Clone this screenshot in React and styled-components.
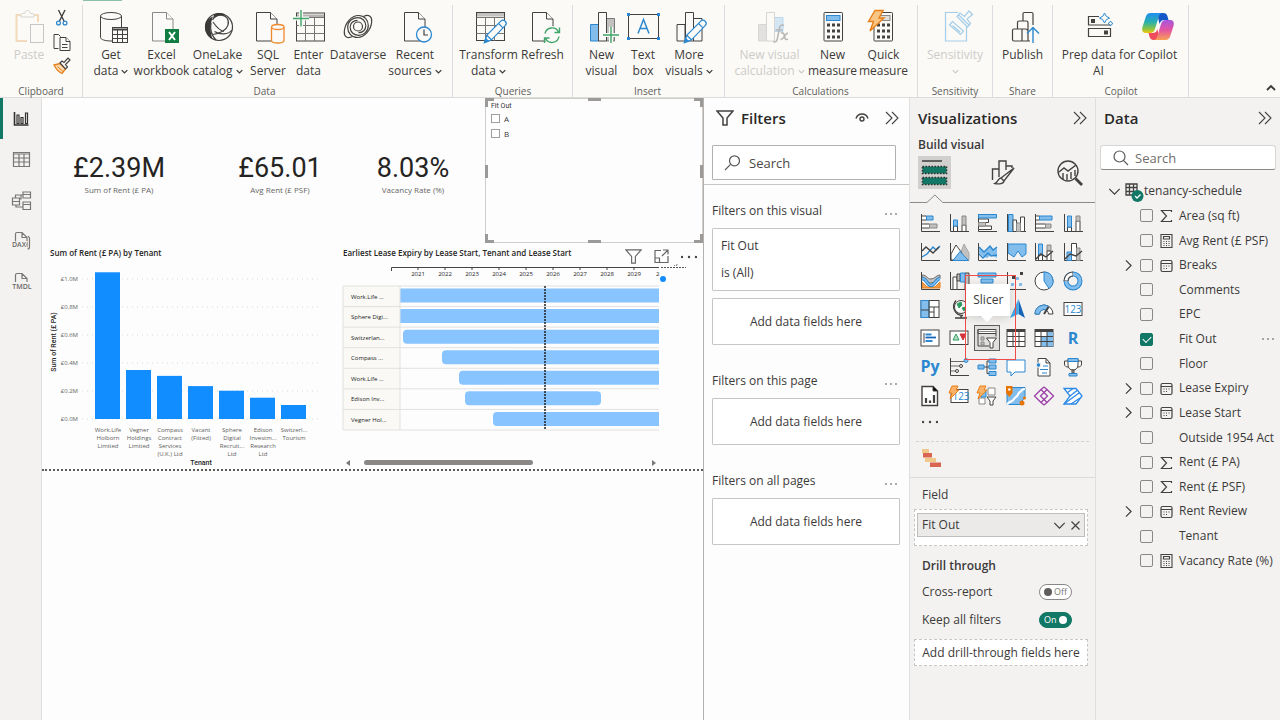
import React, { useState } from 'react'
import styled, { createGlobalStyle } from 'styled-components'

const ink = '#444240'
const blue = '#2b88d0'
const fill = '#83bdec'
const grey = '#c3c1bf'
const green = '#117865'

/* ---------- ribbon icons ---------- */

const Doc = ({ x = 6, color = ink }) => (
    <g fill="#fbfaf8" stroke={color}>
        <path d={`M${x + 0.5} 2.5h14l6.500 6.500v22h-20.500z`} />
        <path d={`M${x + 14.5} 2.500v6.500h6.500`} />
    </g>
)

const Pencil = () => (
    <g fill="#fbfaf8" stroke={blue} strokeWidth="1.2">
        <path d="M12.500 32.500l2.200-7.200L28.800 11.200a3 3 0 0 1 4.400 4.400L19.500 29.800z" />
        <path d="M14.700 25.300l4.800 4.500M26.500 13.500l4.500 4.400" fill="none" />
        <path d="M12.500 32.500l1.200-3.900 2.700 2.600z" fill={blue} />
    </g>
)

const Calc = ({ x = 8, screen = fill, edge = blue }) => (
    <g>
        <rect x={x} y="2.500" width="18.500" height="28.500" rx=".8" fill="#fbfaf8" stroke={ink} />
        <rect x={x + 2.5} y="5.500" width="13.500" height="5" fill={screen} stroke={edge} />
        {[14, 20, 26].map(y => [3, 8, 13].map(dx => (
            <rect key={dx + '-' + y} x={x + dx} y={y - 0.5} width="3" height="3" fill={ink} />
        )))}
    </g>
)

const ribbonIcons = {
    paste: (
        <g fill="none">
            <path d="M11 5H4.500v26H15" stroke="#f3d3ae" strokeWidth="2" />
            <path d="M22 5h4v7" stroke="#f3d3ae" strokeWidth="2" />
            <path d="M9 7V5c0-1 .8-1.500 2-1.500h1.500c.5-2 1.200-3 3-3s2.500 1 3 3H20c1.200 0 2 .5 2 1.500v2z" stroke="#cfcdcb" fill="#fbfaf8" />
            <rect x="18.500" y="14.500" width="13" height="18" stroke="#b9babd" fill="#fbfaf8" />
        </g>
    ),
    database: (
        <g fill="none" stroke={ink}>
            <path d="M6.500 6v21.500c0 2 4.700 3.500 10.500 3.500s10.500-1.500 10.500-3.500V6" fill="#fbfaf8" />
            <ellipse cx="17" cy="6" rx="10.500" ry="3.500" fill="#fbfaf8" />
            <rect x="18.500" y="17.500" width="15" height="15" fill="#fbfaf8" />
            <path d="M18.500 19.500h15" strokeWidth="2" />
            <path d="M18.500 24.500h15M18.500 28.500h15M23.500 20v12.500M28.500 20v12.500" />
        </g>
    ),
    excel: (
        <g>
            <Doc x={7} color="#8b8987" />
            <rect x="20" y="19" width="14" height="14" fill="#107c41" />
            <path d="M24 22l6 8M30 22l-6 8" stroke="#fff" strokeWidth="2" />
        </g>
    ),
    onelake: (
        <g>
            <circle cx="18" cy="17" r="13.500" fill="#fbfaf8" stroke={ink} strokeWidth="1.2" />
            <path d="M13 4.500C15 3 19 2.500 22 3.500c1.200.5 2 1.200 2.500 2.200C20 4.500 15 6 12 9z" fill="#3b3a39" />
            <path d="M12 6.500C6 8.500 4 13.500 4 17c0 5 3 9.500 7.500 12-2.500-7-2.500-15 .5-22.500z" fill="#3b3a39" />
            <path d="M11.500 10c3-5.500 11-6.500 14.500-2 3 4.500 1 10-4 13-4 2.200-8 3.500-11.500 3.500M31 20c-4 5-12 5-17.500 1.500M12 12c3 4 5 8 11 9.500M10 13c-1 6 0 12 5 17" fill="none" stroke={ink} strokeWidth="1.200" />
        </g>
    ),
    sql: (
        <g>
            <Doc x={5} />
            <path d="M20.500 17v13.500c0 1.400 2.800 2.500 6.200 2.500s6.300-1.100 6.300-2.500V17" fill="#fbfaf8" stroke="#ee8a2e" strokeWidth="1.300" />
            <ellipse cx="26.800" cy="17" rx="6.200" ry="2.500" fill="#fbfaf8" stroke="#ee8a2e" strokeWidth="1.300" />
        </g>
    ),
    enter: (
        <g fill="none" stroke={ink}>
            <rect x="4.500" y="3" width="28" height="28" />
            <path d="M5 4.500h27v2.500H5z" fill="#b5b3b1" stroke="none" />
            <path d="M4.500 7.500h28M4.500 15.500h28M4.500 23.500h28M13.500 8v23M22.500 8v23" stroke="#777" />
            <path d="M9 0v16.500M1 8.500h16" stroke="#fbfaf8" strokeWidth="4" />
            <path d="M9 0v16.500M1 8.500h16" stroke="#3fa568" strokeWidth="1.400" />
        </g>
    ),
    dataverse: (
        <g fill="none" stroke={ink} strokeWidth="1.200">
            <path d="M11.500 26.500C6.500 29 3 27 3.300 21.500 3.800 13 10.500 5.500 17.500 5.500c5.800 0 9.800 4.500 9.800 10 0 5.800-4.300 9.800-9.800 9.800-5 0-8.300-3.500-8.300-8" />
            <path d="M22.500 6.500C27.500 4 31 6 30.700 11.500 30.200 20 23.500 27.500 16.500 27.500c-5.800 0-9.800-4.500-9.800-10 0-5.800 4.300-9.800 9.800-9.800 5 0 8.300 3.500 8.300 8" />
            <circle cx="17" cy="16.500" r="4.500" />
            <path d="M9.200 17.300c0-4 3-7 7.300-7M24.800 15.700c0 4-3 7-7.300 7" />
        </g>
    ),
    recent: (
        <g>
            <Doc x={6} />
            <circle cx="26" cy="24.500" r="7.500" fill="#fbfaf8" stroke={blue} strokeWidth="1.300" />
            <path d="M26 19.500v5.500h4" fill="none" stroke={ink} strokeWidth="1.200" />
        </g>
    ),
    transform: (
        <g fill="none" stroke={ink}>
            <rect x="4.500" y="2.500" width="28" height="28" />
            <path d="M5 3h27v3.500H5z" fill="#c3c1bf" stroke="none" />
            <path d="M4.500 7.500h28M4.500 15.500h28M4.500 23.500h28M13.500 7v24M22.500 7v24" stroke="#777" />
            <Pencil />
        </g>
    ),
    refresh: (
        <g>
            <Doc x={6} />
            <circle cx="26" cy="25" r="9" fill="#fbfaf8" />
            <path d="M19 23.500a7.200 7.200 0 0 1 13.500-1.500M33 26.500a7.200 7.200 0 0 1-13.500 2M33.500 17.500v5h-5M18.500 33v-5h5" fill="none" stroke="#3fa568" strokeWidth="1.400" />
        </g>
    ),
    newVisual: (
        <g>
            <path d="M21.500 8.500h8v22.500h-8z" fill={grey} stroke="#777" />
            <path d="M5.500 14.500h8v16.500h-8z" fill={fill} stroke={blue} />
            <path d="M13.500 2.500h8v28.500h-8z" fill="#fbfaf8" stroke={ink} />
            <path d="M26 17v16M18 25h16" stroke="#fbfaf8" strokeWidth="4" />
            <path d="M26 17v16M18 25h16" stroke="#3fa568" strokeWidth="1.400" />
        </g>
    ),
    textBox: (
        <g>
            <rect x="2.500" y="4.500" width="30" height="24" fill="none" stroke={ink} />
            {[[2.5, 4.5], [32.5, 4.5], [2.5, 28.5], [32.5, 28.5]].map(([x, y]) => (
                <rect key={x + '-' + y} x={x - 1.5} y={y - 1.5} width="3" height="3" fill={blue} />
            ))}
            <path d="M12 23.500L17.500 9.500L23 23.500M13.800 18.500h7.400" fill="none" stroke={blue} strokeWidth="1.500" />
        </g>
    ),
    moreVisuals: (
        <g>
            <path d="M21.500 8.500h8.500v22.500h-8.500zM5 14.500h8v16.500H5zM13.500 2.500h8v28.500h-8z" fill="#fbfaf8" stroke={ink} />
            <Pencil />
        </g>
    ),
    newCalc: (
        <g>
            <path d="M5.500 14.500h8v16.500h-8z" fill="#dddcdb" stroke="#cfcecd" />
            <path d="M21.500 7.500h8.500v14h-8.500z" fill="#c9e2f4" stroke="#a9d0ee" />
            <path d="M13.500 2.500h8v28.500h-8z" fill="#fbfaf8" stroke="#cfcecd" />
            <path d="M31 15.500c-2.500-1.500-4 0-4.500 2.500l-2.200 11c-.5 2.500-1.800 3.500-4 2.500M22.500 20h7M28 23c2.500-1 3 1 3.500 3.500s1.500 4 3.500 2.500M35 23c-3 0-4 6.500-7.500 6.500" fill="none" stroke="#a8a6a4" strokeWidth="1.500" />
        </g>
    ),
    calc: <Calc x={8} />,
    quick: (
        <g>
            <Calc x={7} screen="#e1dfdd" edge="#8a8886" />
            <path d="M8 .5h8L12 8h5L3 21l3.500-9.500H1.500z" fill="#f9c686" stroke="#e8801a" strokeWidth="1.400" />
        </g>
    ),
    sensitivity: (
        <g fill="none" stroke="#8fc3e8" strokeWidth="1.200">
            <path d="M20 2.500H7.500v28.500h21V17" />
            <path d="M11.500 15l3-3.500L25.500 21l-3 3.500zM14.500 15.500l7.500 6.500" />
            <path d="M19 6.500l3-3.500 4.500 3.500L31 1l3.500 3.500-5.500 4.500 3.500 4.500-3 3.500z" />
            <path d="M20.500 4.800l10.500 10.200" />
        </g>
    ),
    publish: (
        <g fill="none" stroke={ink} strokeWidth="1.200">
            <path d="M6.500 20.500c0-.8.5-1.500 1.500-1.500h8v12H8c-1 0-1.500-.7-1.500-1.500zM11.500 19v-6.500c0-.8.500-1.500 1.500-1.500h7.500c1 0 1.500.7 1.500 1.500V31M17 11V4c0-.8.500-1.500 1.500-1.500h7c1 0 1.500.7 1.500 1.500v11M16 19h3.500c1 0 2 .7 2 1.500M16 31h8" />
            <path d="M27 33V18M21 23.500l6-6 6 6" stroke={blue} strokeWidth="1.400" />
        </g>
    ),
    prep: (
        <g fill="none" stroke={ink}>
            <path d="M17 6.500H6.500v8.500h22M6.500 18.500h22v8h-22z" strokeWidth="1.200" />
            <rect x="9" y="9" width="4" height="4" fill={ink} stroke="none" />
            <rect x="22" y="20.500" width="4" height="4" fill={ink} stroke="none" />
            <path d="M22.500 3q1 4 5 5q-4 1-5 5q-1-4-5-5q4-1 5-5zM28.500 11q.7 2 2.500 2.500q-1.800.7-2.500 2.500q-.7-1.800-2.500-2.500q1.800-.5 2.500-2.500z" stroke={blue} />
        </g>
    ),
    copilot: (
        <g>
            <defs>
                <linearGradient id="cpA" x1="0" y1="0" x2="0" y2="1">
                    <stop offset="0" stopColor="#1e8df0" />
                    <stop offset=".45" stopColor="#28b0b0" />
                    <stop offset=".75" stopColor="#7cc24d" />
                    <stop offset="1" stopColor="#f2c80f" />
                </linearGradient>
                <linearGradient id="cpB" x1="0" y1="0" x2="0" y2="1">
                    <stop offset="0" stopColor="#a456e0" />
                    <stop offset=".5" stopColor="#e454a0" />
                    <stop offset="1" stopColor="#f9a054" />
                </linearGradient>
            </defs>
            <path d="M16 3h6c3 0 4 1.500 4.700 4l.8 3h-4c-3 0-4 1.500-5 4z" fill="#1557c8" />
            <path d="M18 30h-5c-3 0-4-1.500-4.700-4l-.8-3h4c3 0 4-1.500 5-4z" fill="#ee4b5c" />
            <path d="M9.500 3H21c-2 .5-2.800 2-3.500 4.500L14 19c-.8 2.700-2.200 4-5 4H5c-3.500 0-4.500-2.500-3.500-6L4.700 7C5.600 4.200 7 3 9.500 3z" fill="url(#cpA)" />
            <path d="M24.500 30H13c2-.5 2.800-2 3.500-4.500L20 14c.8-2.700 2.200-4 5-4h4c3.500 0 4.500 2.500 3.500 6l-3.200 10c-.9 2.800-2.300 4-4.800 4z" fill="url(#cpB)" />
        </g>
    ),
}

const RibbonIcon = ({ name }) => (
    <svg width="34" height="34" viewBox="0 0 34 34" overflow="visible" aria-hidden="true">{ribbonIcons[name]}</svg>
)

const CutIcon = () => (
    <svg width="18" height="18" viewBox="0 0 18 18" fill="none" aria-hidden="true">
        <path d="M5.500 1l5.500 11M12 1L6.500 12" stroke={ink} strokeWidth="1.400" />
        <circle cx="5.500" cy="14" r="1.900" stroke={blue} strokeWidth="1.300" />
        <circle cx="12" cy="14" r="1.900" stroke={blue} strokeWidth="1.300" />
    </svg>
)

const CopyIcon = () => (
    <svg width="18" height="18" viewBox="0 0 18 18" fill="#fbfaf8" stroke={ink} aria-hidden="true">
        <path d="M5.500 15.500H1V1.500h4.500l2 2" />
        <path d="M7 4.500h6l4 4v9H7z" />
        <path d="M13 4.500v4h4M9 11.500h5.500M9 14.500h5.500" />
    </svg>
)

const BrushIcon = () => (
    <svg width="18" height="18" viewBox="0 0 18 18" fill="none" aria-hidden="true">
        <path d="M1 8l6-1.500 5.500 5.500-3.500 4.500C6 15 3 12 1 8z" fill="#fbd9b0" stroke="#e8801a" strokeWidth="1.300" />
        <path d="M7 6l2-2 2 1.500L15 1l2 2-4.500 4.500L14.500 10l-2 2z" stroke={ink} strokeWidth="1.200" fill="#fbfaf8" />
        <path d="M4.500 9.500l5.500 5" stroke="#e8801a" />
    </svg>
)

const Chevron = ({ dir = 'down', size = 8, width = 1.2, color = 'currentColor' }) => {
    const d = { down: 'M1 3l4 4 4-4', up: 'M1 7l4-4 4 4', right: 'M3 1l4 4-4 4' }[dir]
    return (
        <svg width={size} height={size} viewBox="0 0 10 10" fill="none" stroke={color} strokeWidth={width} aria-hidden="true">
            <path d={d} />
        </svg>
    )
}

const DoubleChevron = () => (
    <svg width="14" height="14" viewBox="0 0 14 14" fill="none" stroke={ink} strokeWidth="1.100" aria-hidden="true">
        <path d="M1 1l6 6-6 6M7 1l6 6-6 6" />
    </svg>
)

const FunnelIcon = ({ size = 18, color = ink, width = 1.5 }) => (
    <svg width={size} height={size} viewBox="0 0 18 18" fill="none" stroke={color} strokeWidth={width} aria-hidden="true">
        <path d="M1 2h16l-6 7v7H7V9z" />
    </svg>
)

const EyeIcon = () => (
    <svg width="14" height="12" viewBox="0 0 14 12" fill="none" stroke={ink} strokeWidth="1.400" aria-hidden="true">
        <path d="M1 6.500C2 3.500 4.200 2 7 2S12 3.500 13 6.500" />
        <circle cx="7" cy="7" r="2" />
    </svg>
)

const SearchIcon = ({ flip }) => (
    <svg width="16" height="16" viewBox="0 0 16 16" fill="none" stroke="#5a5856" strokeWidth="1.200" aria-hidden="true">
        {flip
            ? <path d="M15 15l-4.300-4.300M12 6.500a5.500 5.500 0 1 1-11 0 5.500 5.500 0 0 1 11 0z" />
            : <path d="M1 15l5.300-5.300M15.500 5.800a5 5 0 1 1-10 0 5 5 0 0 1 10 0z" />}
    </svg>
)

/* ---------- left rail icons ---------- */

const railIcons = {
    report: (
        <g stroke="#323130" strokeWidth="1.200">
            <path d="M3.500 4v13h14" strokeWidth="1.600" />
            <path d="M6 7h2v8.500H6zM10 9.500h2v6h-2zM14.500 5h2v10.500h-2z" />
        </g>
    ),
    table: <path d="M2.500 3.500h16v14h-16zM2.500 5h16M2.500 9h16M2.500 13h16M8 5v12.500M13 5v12.500" />,
    model: <path d="M1.500 8h7v7h-7zM1.500 11.500h7M12 2h7.500v6H12zM12 4.500h7.500M12 12h7.500v7.500H12zM12 14.500h7.500M8.500 9H10V5h2M4.500 8V5H10M5 15v2h7" />,
    dax: <path d="M4.500 11V3c0-1 .5-1.500 1.500-1.500h5l5 5V17M11 1.500v5h5M17 5l1.500 2v9c0 1.500-1 2-2 2" />,
    tmdl: <path d="M4.500 10V3c0-1 .5-1.500 1.500-1.500h5l5 5V10M11 1.500v5h5" />,
}

/* ---------- visual gallery icons ---------- */

const axis = <path d="M1.500 1v17.500H20" fill="none" />

const visualIcons = [
    ['Stacked bar chart', <g>{axis}<path d="M1.500 3h5v4h-5zM1.500 11h8v4h-8z" fill="#fff" /><path d="M6.500 3H13v4H6.500z" fill={fill} stroke={blue} /><path d="M9.500 11H17v4H9.500z" fill={grey} stroke="#8a8886" /></g>],
    ['Stacked column chart', <g>{axis}<path d="M4.500 13h4v5.500h-4zM13 12h4v6.500h-4z" fill="#fff" /><path d="M4.500 7h4v6h-4z" fill={fill} stroke={blue} /><path d="M13 3h4v9h-4z" fill={grey} stroke="#8a8886" /></g>],
    ['Clustered bar chart', <g>{axis}<path d="M1.500 6h10v3.500h-10zM1.500 13h13v3.500h-13z" fill="#fff" /><path d="M1.500 9.500h7V13h-7z" fill={grey} stroke="#8a8886" /><path d="M1.500 1.500h18V5h-18z" fill={fill} stroke={blue} /></g>],
    ['Clustered column chart', <g>{axis}<path d="M2.500 1.500H7v17H2.500z" fill={fill} stroke={blue} /><path d="M7 7h3.500v11.500H7zM14.500 4h4v14.500h-4z" fill="#fff" /><path d="M10.500 10h4v8.500h-4z" fill={grey} stroke="#8a8886" /></g>],
    ['100% stacked bar chart', <g>{axis}<path d="M1.500 3h4v4h-4zM1.500 11h10v4h-10z" fill="#fff" /><path d="M5.500 3H18v4H5.500z" fill={fill} stroke={blue} /><path d="M11.500 11H17v4h-5.500z" fill={grey} stroke="#8a8886" /></g>],
    ['100% stacked column chart', <g>{axis}<path d="M4.500 14h4v4.500h-4zM13 8h4v10.500h-4z" fill="#fff" /><path d="M4.500 3h4v11h-4z" fill={fill} stroke={blue} /><path d="M13 3h4v5h-4z" fill={grey} stroke="#8a8886" /></g>],
    ['Line chart', <g fill="none">{axis}<path d="M2 15l5-3 6-7 3 3 4-4" stroke={blue} strokeWidth="1.400" /><path d="M2 9l4-4 7 6 6-6" strokeWidth="1.400" /></g>],
    ['Area chart', <g>{axis}<path d="M9 18L15 2l5 9v7z" fill={grey} stroke="#a8a6a4" /><path d="M2 12l5-9 6 8 -5 7H2z" fill="#fff" /><path d="M4 18.500l7-9 8.500 9z" fill={fill} stroke={blue} /></g>],
    ['Stacked area chart', <g><path d="M2 5l5 5 6-6 3 4 4-3v11l-6-3-4 3-3-1-5-4z" fill={fill} stroke="none" /><path d="M2 5l5 5 6-6 3 4 4-3M2 12l4 4 5-5 3 3 6-1" fill="none" stroke={blue} strokeWidth="1.400" />{axis}</g>],
    ['100% stacked area chart', <g><path d="M2 2h18v10l-4 3-4-6-4 6-6-4z" fill={fill} stroke={blue} />{axis}</g>],
    ['Line and stacked column', <g>{axis}<path d="M4.500 2h4v11h-4z" fill={fill} stroke={blue} /><path d="M13 3h4v6h-4z" fill={grey} stroke="#8a8886" /><path d="M4.500 13h4v5.500h-4zM13 9h4v9.500h-4z" fill="#fff" /><path d="M2 17l5-5 5 3 7-6" fill="none" strokeWidth="1.400" /></g>],
    ['Line and clustered column', <g>{axis}<path d="M8.500 1.500h5v17h-5z" fill="#fff" /><path d="M4 10h4.500v8.500H4z" fill={fill} stroke={blue} /><path d="M13.500 6h3.500v12.500h-3.500z" fill={grey} stroke="#8a8886" /><path d="M2 17l5-5 6 2 6-5" fill="none" strokeWidth="1.400" /></g>],
    ['Ribbon chart', <g fill="none"><path d="M2 11l5 5h8l5-5v6H2z" fill="#f0a050" stroke="#e8801a" /><path d="M2 4c5 0 5 4 9 4s5-4 9-4v4c-4 0-5 4-9 4S7 8 2 8z" fill={grey} stroke="#6d6b69" /><path d="M2 7.500c5 0 5 7 9 7s5-7 9-7" stroke={blue} strokeWidth="3.400" /><path d="M2 7.500c5 0 5 7 9 7s5-7 9-7" stroke={fill} strokeWidth="1.500" />{axis}</g>],
    ['Waterfall chart', <g>{axis}<path d="M4 6h4v12.500H4z" fill="#fff" /><path d="M8 3h3v7H8zM16 2h4v16h-4z" fill={grey} /><path d="M11.500 2h4.500v9h-4.500z" fill={fill} stroke={blue} /></g>],
    ['Funnel', <g fill={fill} stroke={blue}><path d="M1 2h18v4H1zM4 8h12v4H4zM7 14h6v4H7z" /></g>],
    ['Scatter chart', <g>{axis}<g stroke="none" fill={ink}><rect x="6" y="5" width="3" height="3" /><rect x="14" y="1" width="3" height="3" /></g><g stroke="none" fill={fill}><rect x="10" y="6" width="3" height="3" /><rect x="5" y="12" width="3" height="3" /><rect x="13" y="12" width="3" height="3" /></g></g>],
    ['Pie chart', <g><circle cx="10" cy="10" r="9" fill="#fff" /><path d="M10 1a9 9 0 0 1 5 16.500L10 10z" fill={fill} stroke={blue} /></g>],
    ['Donut chart', <g fill="none"><circle cx="10" cy="10" r="7" stroke={blue} strokeWidth="5" /><circle cx="10" cy="10" r="7" stroke={fill} strokeWidth="3" /><path d="M3 10a7 7 0 0 1 7-7" stroke={ink} strokeWidth="5" /><path d="M3 9.500a7 7 0 0 1 6.500-6.500" stroke="#fff" strokeWidth="3" /></g>],
    ['Treemap', <g><rect x="1" y="1.500" width="18" height="17" fill="#fff" /><path d="M1 1.500h8v17H1z" fill={fill} stroke={blue} /><path d="M9 1.500v17M9 8h10M14 8v10.500M9 13h5M1 11h8" fill="none" /></g>],
    ['Map', <g fill="none"><circle cx="12" cy="8" r="6.500" fill="#fff" /><path d="M7 1.500a9 9 0 0 0 7 15M12 16v2.500M6 19h12" strokeWidth="1.400" /><path d="M8 5l4-2 1 3-3 3zM13 9l4-1-2 4z" fill="#2f9e63" stroke="#2f9e63" /></g>],
    ['Filled map', <path d="M2 4l5-2 6 2 6-2v13l-6 2-6-2-5 2z" fill={fill} stroke={blue} />],
    ['Azure map', <g stroke="none"><path d="M12.500 0L19 19l-6.500-4z" fill="#1565b8" /><path d="M12.500 0L4 19l8.500-4z" fill="#45a7e8" /></g>],
    ['Gauge', <g><path d="M1 15a9 9 0 0 1 18 0h-4.500a4.500 4.500 0 0 0-9 0z" fill="#fff" /><path d="M1 15a9 9 0 0 1 13.500-7.800L12 11a4.500 4.500 0 0 0-6.500 4z" fill={fill} stroke={blue} /><path d="M10 15l4.500-7" strokeWidth="2" /></g>],
    ['Card', <g><rect x="1" y="3.500" width="18" height="13" fill="#fff" /><Digits x={10} /></g>],
    ['Multi-row card', <g><rect x="1" y="2" width="18" height="16" fill="#fff" /><path d="M4 5v10" /><path d="M5.500 6.500h6M5.500 13h7" stroke={blue} strokeWidth="1.800" /><path d="M5.500 9.500H16" stroke="#1565b8" strokeWidth="1.800" /></g>],
    ['KPI', <g><rect x="1" y="3" width="18" height="13.500" fill="#fff" /><path d="M4 12l3-6 3 6z" fill="#b7dcc4" stroke="#2f9e63" /><path d="M11 6h6l-3 6z" fill="#d13438" stroke="#d13438" /></g>],
    ['Slicer', <g><path d="M1 1.500h18v4H1z" fill="#fff" /><path d="M1 5.500h18M1 1.500v16.500h11M19 5.500v3" fill="none" /><path d="M1 3.500h18" stroke="#8a8886" /><path d="M4 9h3v3H4zM4 14h3v3H4z" fill={grey} stroke="#8a8886" /><path d="M9.500 10h10l-3.500 4.500V20h-3v-5.500z" fill="#fff" /></g>],
    ['Table', <g><rect x="1" y="1.500" width="18" height="17" fill="#fff" /><path d="M1 3h18" strokeWidth="2" /><path d="M1 8.500h18M1 13.500h18M7 4v14.500M13 4v14.500" /></g>],
    ['Matrix', <g><rect x="1" y="1.500" width="18" height="17" fill="#fff" /><path d="M1 3h18" strokeWidth="2" /><path d="M13 4h6v9.500h-6zM7 9h6v9.500H7zM13 13.500h6v5h-6z" fill={fill} stroke="none" /><path d="M1 8.500h18M1 13.500h18M7 4v14.500M13 4v14.500" /></g>],
    ['R script visual', <Letter x={10} y={16} size={16}>R</Letter>],
    ['Python visual', <Letter x={10} y={15} size={16}>Py</Letter>],
    ['Key influencers', <g fill="none">{axis}<path d="M2 4.500h13M2 9h8M2 14h5" strokeWidth="1.200" stroke="#6d6b69" /><circle cx="17" cy="3.500" r="2" fill={fill} stroke={blue} /><circle cx="12" cy="9" r="1.500" /><circle cx="8" cy="14" r="1.500" /></g>],
    ['Decomposition tree', <g><path d="M7 10h5M10 4v12.500h2M10 4h2" fill="none" /><path d="M1 8h6v4H1zM12 2h7v4h-7zM12 8h7v4h-7zM12 14.500h7v4h-7z" fill={fill} stroke={blue} /></g>],
    ['Q and A', <path d="M1 3h18v12H9l-4 4v-4H1z" fill="#fff" stroke={blue} />],
    ['Smart narrative', <g><path d="M4 1.500h8l4 4.500v13H4zM12 1.500V6h4" fill="#fff" /><circle cx="4.500" cy="8" r="2.300" fill={blue} stroke="#f3f2f1" /><path d="M9 9h5M6 12.500h8M8 16h5" stroke={blue} /></g>],
    ['Metrics', <g><path d="M5 2h10v6c0 3-2 5-5 5s-5-2-5-5zM5 4H1.500v3c0 2 1.500 3 3.500 3M15 4h3.500v3c0 2-1.500 3-3.500 3" fill="#fff" /><path d="M5 1.500h10v3H5z" fill={fill} stroke={blue} /><path d="M9 13h2v3H9z" fill={grey} /><path d="M6 16.500h8v2.500H6z" fill={fill} stroke={blue} /></g>],
    ['Paginated report', <g><path d="M2 .5h11l4.500 4.500v14.500H2z" fill="#fff" strokeWidth="1.400" /><path d="M13 .5V5h4.500" /><path d="M6 12v5M10 14.500V17M14 9v8" strokeWidth="2.200" /></g>],
    ['Card (new)', <g><rect x="2" y="3.500" width="17" height="13" fill="#fff" /><Digits x={12} /><path d="M3 0h6L7 4h3L1 13l2-6H0z" fill="#f9b368" stroke="#e8801a" /></g>],
    ['Slicer (new)', <g><path d="M11 2h7v7h-7zM2 12h6v6H2z" fill="#fff" stroke="#8a8886" /><path d="M4 5h5v6H4z" fill={fill} stroke={blue} /><path d="M10 11h9l-3 4v4h-3v-4z" fill="#fff" /><path d="M3 0h6L7 4h3L1 13l2-6H0z" fill="#f9b368" stroke="#e8801a" /></g>],
    ['ArcGIS map', <g><path d="M1 1.500h18v9l-5 8H1z" fill={fill} stroke={blue} /><path d="M19 3c-4 0-3 2-5 3s-2 4-4 5-2 3-4 4-3 1-5 3.500" fill="none" stroke="#fff" strokeWidth="2.200" /><path d="M0 0h6.500v7l-3.200 4L0 7z" fill="#e87400" stroke="none" /><circle cx="3.300" cy="3.500" r="1.300" fill="#fff" stroke="none" /><circle cx="16" cy="17" r="2.500" fill="#e87400" stroke="none" /><circle cx="18.500" cy="12" r="1.500" fill="#e87400" stroke="none" /></g>],
    ['Power Apps', <g fill="none" stroke="#9b3fa8" strokeWidth="1.300"><path d="M7 3.500l3-2.500 3 2.500L19.500 10 13 16.500 10 19l-3-2.500L.5 10z" /><path d="M7 3.500L13.500 10 7 16.500M13 3.500L6.500 10l6.500 6.500" /></g>],
    ['Power Automate', <g fill="#fff" stroke="#2b88e8" strokeWidth="1.300"><path d="M1 2.500h12l6 7.500-6 8H1l6-8z" /><path d="M4.500 6.500L10 2.500M7 10l7-5.500M1 18L16 7M8 18l9-6" fill="none" /></g>],
]

function Digits({ x }) {
    return <text x={x} y="14" textAnchor="middle" fontSize="10" fontFamily="Open Sans, sans-serif" fill={blue} stroke="none">123</text>
}

function Letter({ x, y, size, children }) {
    return <text x={x} y={y} textAnchor="middle" fontSize={size} fontWeight="700" fontFamily="Open Sans, sans-serif" fill={blue} stroke="none">{children}</text>
}

const fieldIcons = {
    sum: <path d="M12.500 4V2.500H2.500l5 5.500-5 5.500h10V12" strokeWidth="1.200" />,
    calc: <path d="M2 1.500h11v13H2zM4.500 3.500h6v2.500h-6zM4.500 8.500h1M7 8.500h1M9.500 8.500h1M4.500 10.500h1M7 10.500h1M9.500 10.500h1M4.500 12.500h1M7 12.500h1M9.500 12.500h1" strokeWidth="1.100" />,
    date: <path d="M3.500 2.500h8q1.500 0 1.500 1.500v8q0 1.500-1.500 1.500h-8q-1.500 0-1.500-1.500V4q0-1.500 1.500-1.500zM2 5.500h11M4.500 8h1M7 8h1M9.500 8h1M4.500 10.500h1M7 10.500h1" strokeWidth="1.200" />,
}

/* ---------- content ---------- */

const ribbon = [
    { label: 'Data', pad: '0 9px 0 3px', tools: [
        { icon: 'database', lines: ['Get', 'data'], menu: true, w: 50 },
        { icon: 'excel', lines: ['Excel', 'workbook'], w: 51 },
        { icon: 'onelake', lines: ['OneLake', 'catalog'], menu: true, w: 61 },
        { icon: 'sql', lines: ['SQL', 'Server'], w: 40 },
        { icon: 'enter', lines: ['Enter', 'data'], w: 41 },
        { icon: 'dataverse', lines: ['Dataverse'], w: 58 },
        { icon: 'recent', lines: ['Recent', 'sources'], menu: true, w: 56 },
    ] },
    { label: 'Queries', pad: '0 5px 0 6px', tools: [
        { icon: 'transform', lines: ['Transform', 'data'], menu: true, w: 59 },
        { icon: 'refresh', lines: ['Refresh'], w: 49 },
    ] },
    { label: 'Insert', pad: '0 10px 0 8px', tools: [
        { icon: 'newVisual', lines: ['New', 'visual'], w: 41 },
        { icon: 'textBox', lines: ['Text', 'box'], w: 42 },
        { icon: 'moreVisuals', lines: ['More', 'visuals'], menu: true, w: 50 },
    ] },
    { label: 'Calculations', pad: '0 8px 0 7px', tools: [
        { icon: 'newCalc', lines: ['New visual', 'calculation'], menu: true, off: true, w: 75 },
        { icon: 'calc', lines: ['New', 'measure'], w: 51 },
        { icon: 'quick', lines: ['Quick', 'measure'], w: 51 },
    ] },
    { label: 'Sensitivity', pad: '0 7px', tools: [
        { icon: 'sensitivity', lines: ['Sensitivity', ''], menu: true, off: true, w: 60 },
    ] },
    { label: 'Share', pad: '0 5px', tools: [
        { icon: 'publish', lines: ['Publish'], w: 49 },
    ] },
    { label: 'Copilot', pad: '0 8px 0 9px', tools: [
        { icon: 'prep', lines: ['Prep data for', 'AI'], w: 73 },
        { icon: 'copilot', lines: ['Copilot'], w: 45 },
    ] },
]

const cards = [
    ['£2.39M', 'Sum of Rent (£ PA)'],
    ['£65.01', 'Avg Rent (£ PSF)'],
    ['8.03%', 'Vacancy Rate (%)'],
]

const rents = [
    [1.048, ['Work.Life', 'Holborn', 'Limited']],
    [0.35, ['Vegner', 'Holdings', 'Limited']],
    [0.308, ['Compass', 'Contract', 'Services', '(U.K.) Ltd']],
    [0.235, ['Vacant', '(Fitted)']],
    [0.202, ['Sphere', 'Digital', 'Recruit...', 'Ltd']],
    [0.152, ['Edison', 'Investm...', 'Research', 'Ltd']],
    [0.1, ['Switzerl...', 'Tourism']],
]

const leases = [
    ['Work.Life ...', 61, 320],
    ['Sphere Digi...', 61, 320],
    ['Switzerlan...', 64, 320],
    ['Compass ...', 103, 320],
    ['Work.Life ...', 120, 320],
    ['Edison Inv...', 126, 262],
    ['Vegner Hol...', 154, 320],
]

const fields = [
    { name: 'Area (sq ft)', icon: 'sum' },
    { name: 'Avg Rent (£ PSF)', icon: 'calc' },
    { name: 'Breaks', icon: 'date', open: true },
    { name: 'Comments' },
    { name: 'EPC' },
    { name: 'Fit Out', checked: true },
    { name: 'Floor' },
    { name: 'Lease Expiry', icon: 'date', open: true },
    { name: 'Lease Start', icon: 'date', open: true },
    { name: 'Outside 1954 Act' },
    { name: 'Rent (£ PA)', icon: 'sum' },
    { name: 'Rent (£ PSF)', icon: 'sum' },
    { name: 'Rent Review', icon: 'date', open: true },
    { name: 'Tenant' },
    { name: 'Vacancy Rate (%)', icon: 'calc' },
]

/* ---------- charts ---------- */

const RentChart = () => {
    const base = 157
    const unit = 140
    return (
        <svg viewBox="0 0 297 207" width="100%" role="img" aria-label="Sum of Rent (£ PA) by Tenant">
            {[0, 0.2, 0.4, 0.6, 0.8, 1].map(v => (
                <g key={v}>
                    <line x1="40" x2="276" y1={base - v * unit} y2={base - v * unit} stroke="#dcdad8" strokeDasharray="1 4" />
                    <ChartText x="36" y={base - v * unit + 2} textAnchor="end" fill="#666">£{v.toFixed(1)}M</ChartText>
                </g>
            ))}
            {rents.map(([v, lines], i) => (
                <g key={i}>
                    <rect x={53 + i * 31} y={base - v * unit} width="25" height={v * unit} fill="#118dff" />
                    {lines.map((line, n) => (
                        <ChartText key={n} x={66 + i * 31} y={170 + n * 8} textAnchor="middle" fill="#605e5c">{line}</ChartText>
                    ))}
                </g>
            ))}
            <AxisTitle x="159" y="203" textAnchor="middle">Tenant</AxisTitle>
            <AxisTitle textAnchor="middle" transform="translate(14 80) rotate(-90)">Sum of Rent (£ PA)</AxisTitle>
        </svg>
    )
}

const LeaseChart = () => (
    <svg viewBox="0 0 364 207" width="100%" role="img" aria-label="Earliest Lease Expiry by Lease Start">
        <path d="M52.500 9V5.500H320" fill="none" stroke="#444" />
        {[2021, 2022, 2023, 2024, 2025, 2026, 2027, 2028, 2029].map((year, i) => (
            <g key={year}>
                <line x1={79 + i * 27} x2={79 + i * 27} y1="5" y2="8" stroke="#444" />
                <ChartText x={79 + i * 27} y="14" textAnchor="middle" fill="#222">{year}</ChartText>
            </g>
        ))}
        <ChartText x="317" y="14" fill="#222">2</ChartText>
        <path d="M322 5.500h25" stroke="#555" strokeDasharray="2 1" />
        <path d="M335 3.500h3M338 2v2" stroke="#777" strokeDasharray="1 1" />
        <circle cx="324" cy="17" r="3" fill="#118dff" />
        <rect x="4" y="24" width="57" height="144" fill="#faf9f5" />
        {leases.map(([name, from, to], i) => {
            const y = 24 + i * 144 / 7
            const open = to === 320
            const r = from > 61 ? 4 : 0
            return (
                <g key={i}>
                    <line x1="4" x2="320" y1={y} y2={y} stroke="#e3e1df" />
                    <ChartText x="12" y={y + 12.5} fill="#222">{name}</ChartText>
                    <path
                        fill="#88c4ff"
                        d={open
                            ? `M320 ${y + 2.5}V${y + 16.5}H${from + r}q${-r} 0 ${-r} ${-r}V${y + 2.5 + r}q0 ${-r} ${r} ${-r}z`
                            : `M${to - r} ${y + 2.5}q${r} 0 ${r} ${r}V${y + 16.5 - r}q0 ${r} ${-r} ${r}H${from + r}q${-r} 0 ${-r} ${-r}V${y + 2.5 + r}q0 ${-r} ${r} ${-r}z`}
                    />
                </g>
            )
        })}
        <path d="M4 168H320M4 24v144M61 24v144" stroke="#e3e1df" />
        <line x1="206" x2="206" y1="24" y2="168" stroke="#222" strokeWidth="1.500" strokeDasharray="2 1" />
        <path d="M11 198v6l-4-3zM313 198v6l4-3z" fill="#7a7876" />
        <rect x="25" y="198" width="169" height="5" rx="2.500" fill="#8a8886" />
    </svg>
)

const Toggle = ({ label, initial }) => {
    const [on, setOn] = useState(initial)
    return (
        <ToggleRow>
            {label}
            <input type="checkbox" role="switch" checked={on} onChange={() => setOn(!on)} />
            <Track $on={on}><span>{on ? 'On' : 'Off'}</span><i /></Track>
        </ToggleRow>
    )
}

const FilterSection = ({ title, children }) => (
    <Section>
        <SectionHead>
            <h3>{title}</h3>
            <PlainButton aria-label="More options"><Dots /></PlainButton>
        </SectionHead>
        {children}
        <DropCard>Add data fields here</DropCard>
    </Section>
)

const Dots = ({ size = 12 }) => (
    <svg width={size} height="4" viewBox={`0 0 ${size} 4`} fill={ink} aria-hidden="true">
        {[1, size / 2, size - 1].map(x => <circle key={x} cx={x} cy="2" r={size > 14 ? 1.2 : 0.8} />)}
    </svg>
)

const App = () => {
    const [picked, setPicked] = useState(fields.filter(f => f.checked).map(f => f.name))
    const toggle = name => setPicked(picked.includes(name) ? picked.filter(n => n !== name) : [...picked, name])

    return (
        <Page>
            <GlobalStyle />
            <Ribbon>
                <Clipboard>
                    <Tools>
                        <Tool $w={58} disabled>
                            <RibbonIcon name="paste" />
                            <span>Paste</span>
                        </Tool>
                        <SmallTools>
                            <PlainButton aria-label="Cut"><CutIcon /></PlainButton>
                            <PlainButton aria-label="Copy"><CopyIcon /></PlainButton>
                            <PlainButton aria-label="Format painter"><BrushIcon /></PlainButton>
                        </SmallTools>
                    </Tools>
                    <GroupLabel>Clipboard</GroupLabel>
                </Clipboard>
                {ribbon.map(group => (
                    <Group key={group.label} $pad={group.pad}>
                        <Tools>
                            {group.tools.map(tool => (
                                <Tool key={tool.lines.join(' ')} $w={tool.w} disabled={tool.off}>
                                    <RibbonIcon name={tool.icon} />
                                    {tool.lines.map((line, i) => (
                                        <span key={i}>
                                            {line}
                                            {tool.menu && i === tool.lines.length - 1 && <Chevron size={7} width={1.8} />}
                                        </span>
                                    ))}
                                </Tool>
                            ))}
                        </Tools>
                        <GroupLabel>{group.label}</GroupLabel>
                    </Group>
                ))}
                <Collapse aria-label="Collapse ribbon"><Chevron dir="up" size={10} width={1.8} /></Collapse>
            </Ribbon>

            <Body>
                <Rail>
                    {Object.keys(railIcons).map((name, i) => (
                        <RailButton key={name} $active={i === 0} aria-label={name + ' view'}>
                            <svg width="21" height="21" viewBox="0 0 21 21" fill="none" stroke="#797775" strokeWidth="1.200" overflow="visible">
                                {railIcons[name]}
                                {i > 2 && (
                                    <text x={i === 3 ? 8 : 11} y={i === 3 ? 16 : 17} textAnchor="middle" fontSize="7" fontWeight="600" fill="#6b6967" stroke="#f3f2f1" strokeWidth="2" paintOrder="stroke">
                                        {name.toUpperCase()}
                                    </text>
                                )}
                            </svg>
                        </RailButton>
                    ))}
                </Rail>

                <Canvas>
                    <TopRow>
                        {cards.map(([value, label]) => (
                            <Card key={label}>
                                <strong>{value}</strong>
                                <span>{label}</span>
                            </Card>
                        ))}
                        <Slicer>
                            <legend>Fit Out</legend>
                            {['A', 'B'].map(v => (
                                <label key={v}><SlicerBox type="checkbox" />{v}</label>
                            ))}
                            {['top left', 'top center', 'top right', 'middle left', 'middle right', 'bottom left', 'bottom center', 'bottom right'].map(at => (
                                <Handle key={at} $at={at} />
                            ))}
                        </Slicer>
                    </TopRow>
                    <ChartRow>
                        <Chart>
                            <ChartHead $left={8}><h4>Sum of Rent (£ PA) by Tenant</h4></ChartHead>
                            <RentChart />
                        </Chart>
                        <Chart>
                            <ChartHead $left={4}>
                                <h4>Earliest Lease Expiry by Lease Start, Tenant and Lease Start</h4>
                                <ChartTools>
                                    <PlainButton aria-label="Filters"><FunnelIcon size={17} color="#666" width={1.2} /></PlainButton>
                                    <PlainButton aria-label="Focus mode">
                                        <svg width="15" height="15" viewBox="0 0 15 15" fill="none" stroke="#666" strokeWidth="1.200">
                                            <path d="M7 1.500H1v12h13V7M1 9h4.500v4.500M9 1h5v4.500M8 7l6-6" />
                                        </svg>
                                    </PlainButton>
                                    <PlainButton aria-label="More options"><Dots size={16} /></PlainButton>
                                </ChartTools>
                            </ChartHead>
                            <LeaseChart />
                        </Chart>
                    </ChartRow>
                </Canvas>

                <Filters>
                    <FilterTitle>
                        <FunnelIcon />
                        <h2>Filters</h2>
                        <PlainButton aria-label="Hide pane"><EyeIcon /></PlainButton>
                        <PlainButton aria-label="Collapse filters"><DoubleChevron /></PlainButton>
                    </FilterTitle>
                    <FilterSearch>
                        <SearchIcon />
                        <input type="search" placeholder="Search" aria-label="Search filters" />
                    </FilterSearch>
                    <FilterSection title="Filters on this visual">
                        <FilterCard>
                            <span>Fit Out</span>
                            <span>is (All)</span>
                        </FilterCard>
                    </FilterSection>
                    <FilterSection title="Filters on this page" />
                    <FilterSection title="Filters on all pages" />
                </Filters>

                <Visuals>
                    <PaneTitle>
                        <h2>Visualizations</h2>
                        <PlainButton aria-label="Collapse visualizations"><DoubleChevron /></PlainButton>
                    </PaneTitle>
                    <BuildLabel>Build visual</BuildLabel>
                    <BuildTabs>
                        <BuildTab $active aria-label="Build visual">
                            <svg width="27" height="27" viewBox="0 0 27 27" stroke="#323130" fill={green}>
                                <path d="M1 2h20" strokeWidth="1.400" />
                                <path d="M1.500 7.500h24v7h-24zM1.500 18.500h24v7h-24z" strokeWidth="1.600" strokeDasharray="1.500 1.500" />
                            </svg>
                        </BuildTab>
                        <BuildTab aria-label="Format visual">
                            <svg width="27" height="27" viewBox="0 0 27 27" stroke={ink} strokeWidth="1.400" fill="none">
                                <path d="M3.500 21V10H10M10 18V2h7v9M17 7h6v2" />
                                <path d="M25 9L12 19l3 3L25 9zM12 19c-3 0-3 4-6 5.500 4 1 9 0 9-2.500" fill="#f3f2f1" />
                            </svg>
                        </BuildTab>
                        <BuildTab aria-label="Analytics">
                            <svg width="27" height="27" viewBox="0 0 27 27" stroke={ink} strokeWidth="1.400" fill="none">
                                <circle cx="12" cy="12" r="10" />
                                <path d="M3 13l5-4 4 3 8-6M7 14v6M11 15v6M15 13v7M19 11v6" />
                                <path d="M19.500 19.500L26 26" strokeWidth="2.800" />
                            </svg>
                        </BuildTab>
                    </BuildTabs>
                    <Notch width="186" height="9" viewBox="0 0 186 9" fill="none" stroke="#8a8886" aria-hidden="true">
                        <path d="M0 8.500h17l8-7.500 8 7.500h153" />
                    </Notch>
                    <Gallery>
                        {visualIcons.map(([name, art]) => (
                            <VisualButton key={name} $active={name === 'Slicer'} aria-label={name}>
                                <svg width="20" height="20" viewBox="0 0 20 20" stroke={ink} overflow="visible">{art}</svg>
                                {name === 'Slicer' && <><Highlight /><Tip role="tooltip">Slicer</Tip></>}
                            </VisualButton>
                        ))}
                    </Gallery>
                    <MoreVisuals aria-label="More visuals"><Dots size={16} /></MoreVisuals>
                    <CustomVisuals>
                        <PlainButton aria-label="Gantt">
                            <svg width="20" height="20" viewBox="0 0 20 20">
                                <path d="M1 1h7v4H1zM4 10h11v4H4z" fill="#efc98b" />
                                <path d="M2 5h9v4.500H2zM9 14.500h11V19H9z" fill="#d96650" />
                            </svg>
                        </PlainButton>
                    </CustomVisuals>
                    <Wells>
                        <h3>Field</h3>
                        <Well>
                            <Pill>
                                <span>Fit Out</span>
                                <PlainButton aria-label="Field options"><Chevron size={13} width={0.9} /></PlainButton>
                                <PlainButton aria-label="Remove field">
                                    <svg width="9" height="9" viewBox="0 0 9 9" stroke={ink} strokeWidth="1.200"><path d="M.5.500l8 8M8.500.500l-8 8" /></svg>
                                </PlainButton>
                            </Pill>
                        </Well>
                        <DrillTitle>Drill through</DrillTitle>
                        <Toggle label="Cross-report" initial={false} />
                        <Toggle label="Keep all filters" initial={true} />
                        <DrillWell>Add drill-through fields here</DrillWell>
                    </Wells>
                </Visuals>

                <DataPane>
                    <PaneTitle>
                        <h2>Data</h2>
                        <PlainButton aria-label="Collapse data"><DoubleChevron /></PlainButton>
                    </PaneTitle>
                    <DataSearch>
                        <SearchIcon flip />
                        <input type="search" placeholder="Search" aria-label="Search fields" />
                    </DataSearch>
                    <Tree>
                        <TableRow>
                            <Chevron size={13} width={0.9} />
                            <svg width="18" height="20" viewBox="0 0 18 20" fill="none" stroke={ink} strokeWidth="1.300" overflow="visible">
                                <path d="M2 3h11v11H2zM2 6.500h11M2 10.500h11M5.500 3v11M9.500 3v11" />
                                <circle cx="13.500" cy="15" r="6" fill={green} stroke="none" />
                                <path d="M11 15l2 2 3.500-3.500" stroke="#fff" />
                            </svg>
                            <span>tenancy-schedule</span>
                        </TableRow>
                        {fields.map(f => (
                            <FieldRow key={f.name}>
                                <Expand>{f.open && <PlainButton aria-label={'Expand ' + f.name}><Chevron dir="right" size={13} width={0.9} /></PlainButton>}</Expand>
                                <label>
                                    <FieldBox type="checkbox" checked={picked.includes(f.name)} onChange={() => toggle(f.name)} />
                                    <svg width="15" height="15" viewBox="0 0 15 15" fill="none" stroke={ink}>{fieldIcons[f.icon]}</svg>
                                    {f.name}
                                </label>
                                {f.checked && <PlainButton aria-label="More options"><Dots /></PlainButton>}
                            </FieldRow>
                        ))}
                    </Tree>
                </DataPane>
            </Body>
        </Page>
    )
}

/* ---------- styles ---------- */

const GlobalStyle = createGlobalStyle`
    * {
        box-sizing: border-box;
    }
    body {
        margin: 0;
        background: #fdfdfd;
        color: #3b3a39;
        font-family: "Open Sans", "Noto Sans", sans-serif;
        font-size: 12px;
        line-height: 16px;
    }
    button, input {
        font: inherit;
        color: inherit;
    }
    h2, h3, h4, ul {
        margin: 0;
        padding: 0;
        font-size: inherit;
        font-weight: 400;
    }
    h2 {
        color: #292827;
        font-size: 15px;
        line-height: 20px;
        font-weight: 600;
    }
    svg {
        display: block;
        flex: none;
    }
`

const Page = styled.div`
    display: flex;
    flex-direction: column;
    min-height: 100vh;
`

const Ribbon = styled.header`
    display: flex;
    align-items: stretch;
    padding: 5px 4px 0 0;
    background: linear-gradient(#8cc0ae, #8cc0ae) 83px 0 / 39px 1px no-repeat, #fbfaf6;
    border-bottom: 1px solid #dddbd9;
`

const Group = styled.section`
    display: flex;
    flex-direction: column;
    padding: ${p => p.$pad || 0};
    border-right: 1px solid #dcdbe0;
`

const Clipboard = styled(Group)`
    width: 83px;
`

const Tools = styled.div`
    display: flex;
    flex: 1;
`

const Tool = styled.button`
    display: flex;
    flex-direction: column;
    align-items: center;
    flex: none;
    width: ${p => p.$w}px;
    height: 80px;
    padding: 5px 0 0;
    border: 0;
    background: none;
    white-space: nowrap;
    opacity: ${p => (p.disabled ? 0.8 : 1)};
    color: ${p => (p.disabled ? '#c3c1c0' : '#3b3a39')};
    span {
        display: flex;
        align-items: center;
        gap: 3px;
        height: 16px;
    }
    svg + span {
        margin-top: 3px;
    }
`

const SmallTools = styled.div`
    display: flex;
    flex-direction: column;
    align-items: center;
    gap: 6px;
    padding: 4px 0 0;
    width: 8px;
`

const PlainButton = styled.button`
    display: grid;
    place-items: center;
    flex: none;
    padding: 0;
    border: 0;
    background: none;
`

const GroupLabel = styled.div`
    color: #605e5c;
    font-size: 10px;
    line-height: 12px;
    text-align: center;
`

const Collapse = styled(PlainButton)`
    align-self: flex-end;
    margin-left: auto;
    padding-bottom: 4px;
`

const Body = styled.div`
    display: flex;
    flex: 1;
`

const Rail = styled.nav`
    display: flex;
    flex-direction: column;
    width: 42px;
    background: #f3f2f1;
    border-right: 1px solid #e1dfdd;
`

const RailButton = styled.button`
    display: grid;
    place-items: center;
    height: 41px;
    padding: 0 1px 0 0;
    border: 0;
    border-left: 3px solid ${p => (p.$active ? green : 'transparent')};
    background: none;
`

const Canvas = styled.main`
    flex: 1;
    min-width: 0;
`

const TopRow = styled.div`
    display: grid;
    grid-template-columns: 154fr 168fr 98fr 241fr;
    height: 145px;
`

const Card = styled.div`
    display: flex;
    flex-direction: column;
    align-items: center;
    padding-top: 55px;
    white-space: nowrap;
    strong {
        color: #252423;
        font: 400 27px/31px Roboto, sans-serif;
    }
    span {
        color: #666;
        font-size: 8px;
        line-height: 12px;
    }
`

const Slicer = styled.fieldset`
    position: relative;
    margin: 0 0 0 23px;
    padding: 2px 5px;
    border: 1px solid #cfcecd;
    font-size: 8px;
    legend {
        float: left;
        width: 100%;
        padding: 0;
        color: #333;
        font: 7px/10px Roboto, sans-serif;
    }
    label {
        display: flex;
        align-items: center;
        gap: 4px;
        height: 15px;
        clear: both;
    }
`

const SlicerBox = styled.input`
    appearance: none;
    width: 9px;
    height: 9px;
    margin: 0;
    border: 1px solid #a19f9d;
    background: #fff;
`

const Handle = styled.i`
    position: absolute;
    ${({ $at }) => {
        const [v, h] = $at.split(' ')
        const c = '3px solid #9c9a98'
        const corner = v !== 'middle' && h !== 'center'
        return `
            width: ${corner ? 9 : h === 'center' ? 13 : 3}px;
            height: ${corner ? 9 : h === 'center' ? 3 : 13}px;
            ${v === 'middle' ? 'top: calc(50% - 6px);' : `${v}: -1px;`}
            ${h === 'center' ? 'left: calc(50% - 6px);' : `${h}: -1px;`}
            ${v !== 'middle' ? `border-${v}: ${c};` : ''}
            ${h !== 'center' ? `border-${h}: ${c};` : ''}
        `
    }}
`

const ChartRow = styled.div`
    display: grid;
    grid-template-columns: 297fr 364fr;
    border-bottom: 2px dotted #5c5a58;
`

const Chart = styled.section`
    min-width: 0;
`

const ChartHead = styled.div`
    display: flex;
    align-items: center;
    justify-content: space-between;
    height: 19px;
    padding: 0 6px 0 ${p => p.$left}px;
    h4 {
        color: #252423;
        font-size: 8px;
        line-height: 12px;
        font-weight: 600;
        white-space: nowrap;
    }
`

const ChartTools = styled.div`
    display: flex;
    align-items: center;
    gap: 12px;
    padding-top: 8px;
`

const ChartText = styled.text`
    font-size: 6px;
`

const AxisTitle = styled.text`
    fill: #252423;
    font: 500 7px Roboto, sans-serif;
`

const Filters = styled.aside`
    width: 206px;
    flex: none;
    border-left: 1px solid #b3b0ad;
`

const FilterTitle = styled.div`
    display: flex;
    align-items: center;
    gap: 7px;
    padding: 10px 10px 0 12px;
    h2 {
        flex: 1;
    }
    button + button {
        margin-left: 9px;
    }
`

const SearchBase = styled.label`
    display: flex;
    align-items: center;
    font-size: 13px;
    input {
        flex: 1;
        min-width: 0;
        padding: 0;
        border: 0;
        outline: 0;
        background: none;
    }
    input::placeholder {
        color: #4a4846;
        opacity: 1;
    }
`

const FilterSearch = styled(SearchBase)`
    gap: 9px;
    height: 35px;
    margin: 17px 13px 4px 8px;
    padding: 0 11px;
    border: 1px solid #b3b0ad;
    border-radius: 1px;
    background: #fff;
    & + section {
        border-top: 1px solid #c8c6c4;
        padding-top: 17px;
    }
`

const Section = styled.section`
    display: flex;
    flex-direction: column;
    padding-top: 27px;
`

const SectionHead = styled.div`
    display: flex;
    align-items: center;
    justify-content: space-between;
    height: 18px;
    margin: 0 12px 8px 8px;
    button {
        padding-top: 5px;
    }
`

const FilterCard = styled.div`
    display: flex;
    flex-direction: column;
    gap: 11px;
    height: 63px;
    margin: 0 9px 7px 8px;
    padding: 9px 8px;
    border: 1px solid #c8c6c4;
    border-radius: 1px;
    background: #fff;
`

const DropCard = styled.div`
    display: grid;
    place-items: center;
    height: 47px;
    margin: 0 9px 0 8px;
    border: 1px solid #c8c6c4;
    border-radius: 1px;
    background: #fff;
`

const Pane = styled.aside`
    flex: none;
    background: #f3f2f1;
    border-left: 1px solid #e1dfdd;
`

const Visuals = styled(Pane)`
    width: 186px;
`

const DataPane = styled(Pane)`
    width: 185px;
`

const PaneTitle = styled.div`
    display: flex;
    align-items: center;
    justify-content: space-between;
    padding: 10px 8px 0;
`

const BuildLabel = styled.h3`
    padding: 9px 8px 3px;
    font-weight: 600;
`

const BuildTabs = styled.div`
    display: flex;
    justify-content: space-between;
    padding: 0 9px 0 8px;
`

const BuildTab = styled(PlainButton)`
    width: 33px;
    height: 33px;
    background: ${p => (p.$active ? '#d2d0ce' : 'none')};
`

const Notch = styled.svg`
    width: 100%;
    margin-top: 5px;
`

const Gallery = styled.div`
    display: grid;
    grid-template-columns: repeat(6, 1fr);
    grid-template-rows: repeat(7, 1fr);
    height: 201px;
    margin: 6px 8px 0 6px;
`

const VisualButton = styled(PlainButton)`
    position: relative;
    svg {
        box-sizing: content-box;
        padding: ${p => (p.$active ? '2px' : 0)};
        border: ${p => (p.$active ? '1px solid #605e5c' : 0)};
        background: ${p => (p.$active ? '#e1dfdd' : 'none')};
    }
`

const Highlight = styled.i`
    position: absolute;
    z-index: 1;
    left: calc(50% - 22px);
    bottom: -7px;
    width: 51px;
    height: 85px;
    border: 1px solid #f04b4b;
`

const Tip = styled.span`
    position: absolute;
    z-index: 2;
    bottom: 37px;
    left: calc(50% - 21px);
    padding: 8px 7px;
    background: #fff;
    box-shadow: 0 2px 10px rgba(0, 0, 0, 0.15);
    &::after {
        content: '';
        position: absolute;
        left: 15px;
        top: 100%;
        border: 6px solid transparent;
        border-top-color: #fff;
    }
`

const MoreVisuals = styled(PlainButton)`
    height: 24px;
    margin-left: 12px;
`

const CustomVisuals = styled.div`
    margin: 7px 6px 0;
    padding: 6px 5px 9px;
    border-top: 1px dashed #d5d3d1;
`

const Wells = styled.div`
    border-top: 1px solid #dddbd9;
    padding: 9px 7px 0 4px;
    h3 {
        padding-left: 8px;
    }
`

const Well = styled.div`
    height: 37px;
    margin-top: 6px;
    padding: 3px 2px;
    border: 1px dashed #c8c6c4;
    background: #fff;
`

const Pill = styled.div`
    display: flex;
    align-items: center;
    gap: 5px;
    height: 24px;
    padding: 0 4px;
    border: 1px solid #c0bebc;
    background: #ebeae9;
    span {
        flex: 1;
    }
`

const DrillTitle = styled.h3`
    margin-top: 12px;
    font-weight: 600;
`

const ToggleRow = styled.label`
    display: flex;
    align-items: center;
    height: 28px;
    padding: 0 16px 0 8px;
    input {
        appearance: none;
        width: 0;
        height: 0;
        margin: 0 0 0 auto;
    }
    h3 + & {
        margin-top: 4px;
    }
`

const Track = styled.span`
    display: flex;
    flex-direction: ${p => (p.$on ? 'row' : 'row-reverse')};
    align-items: center;
    justify-content: space-between;
    width: 33px;
    height: 16px;
    padding: 0 4px;
    border: 1px solid ${p => (p.$on ? green : '#8a8886')};
    border-radius: 8px;
    background: ${p => (p.$on ? green : '#fff')};
    color: ${p => (p.$on ? '#fff' : '#797775')};
    font-size: 9px;
    i {
        width: 8px;
        height: 8px;
        border-radius: 50%;
        background: ${p => (p.$on ? '#fff' : '#605e5c')};
    }
`

const DrillWell = styled.div`
    display: grid;
    place-items: center;
    height: 27px;
    margin-top: 5px;
    border: 1px dashed #c8c6c4;
    background: #fff;
    white-space: nowrap;
`

const DataSearch = styled(SearchBase)`
    gap: 6px;
    height: 25px;
    margin: 17px 4px 0;
    padding: 0 12px;
    border: 1px solid #d8d6d4;
    border-bottom-color: #8a8886;
    border-radius: 3px;
    background: #fff;
    input::placeholder {
        color: #706e6c;
    }
`

const Tree = styled.ul`
    display: grid;
    grid-template-rows: repeat(16, 1fr);
    height: 394px;
    margin-top: 9px;
    list-style: none;
`

const TableRow = styled.li`
    display: flex;
    align-items: center;
    gap: 3px;
    padding-left: 12px;
    svg + span {
        margin-left: -1px;
    }
`

const FieldRow = styled.li`
    display: flex;
    align-items: center;
    padding: 0 8px 0 26px;
    white-space: nowrap;
    label {
        display: flex;
        flex: 1;
        align-items: center;
    }
    label svg {
        margin: 0 5px 0 6px;
    }
`

const Expand = styled.span`
    width: 18px;
`

const FieldBox = styled.input`
    appearance: none;
    flex: none;
    width: 13px;
    height: 13px;
    margin: 0;
    border: 1px solid #8a8886;
    border-radius: 2px;
    &:checked {
        border-color: ${green};
        background: ${green};
    }
    &:checked::before {
        content: '';
        display: block;
        width: 7px;
        height: 4px;
        margin: 2px;
        border: solid #fff;
        border-width: 0 0 1px 1px;
        transform: rotate(-45deg);
    }
`

export default App
